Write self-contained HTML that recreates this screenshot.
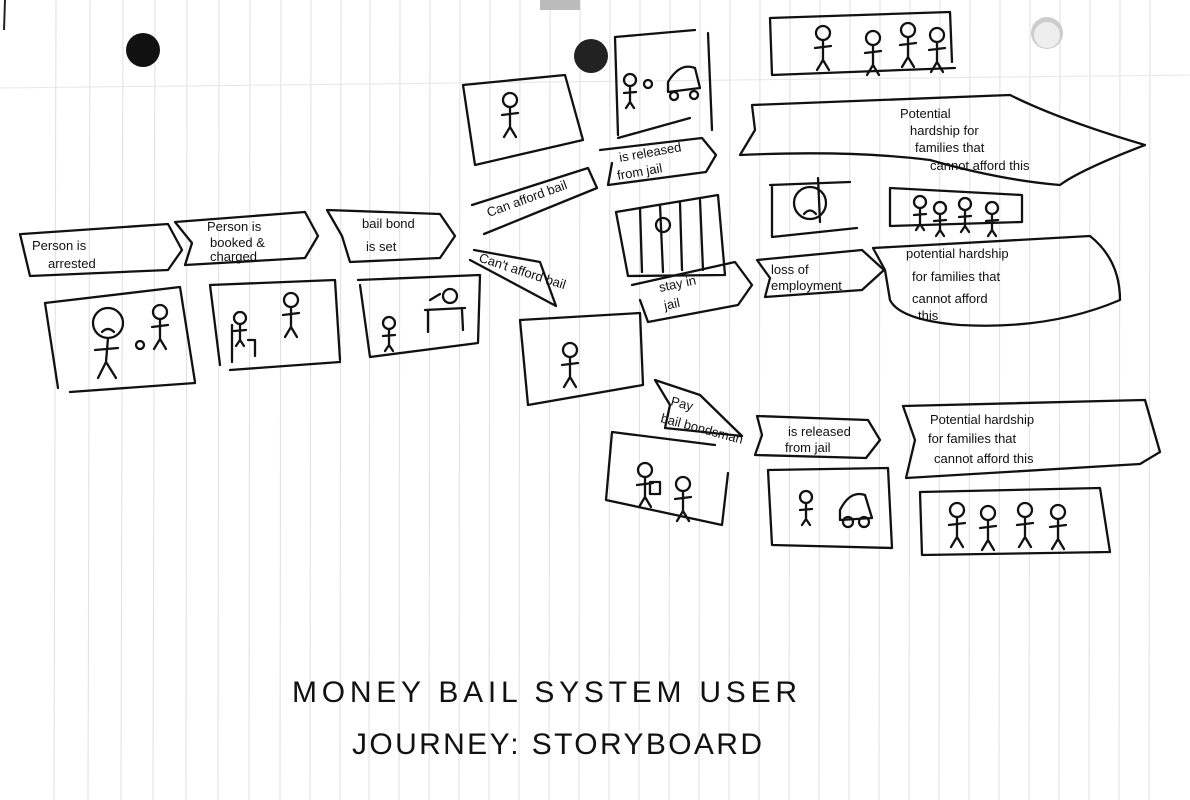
<!DOCTYPE html>
<html><head><meta charset="utf-8"><style>
html,body{margin:0;padding:0;background:#fff;}
svg{display:block}
.l{fill:none;stroke:#111;stroke-width:2.3;stroke-linecap:round;stroke-linejoin:round}
.t{font-family:"Liberation Sans",sans-serif;fill:#111;font-size:13px}
.b{font-family:"Liberation Sans",sans-serif;fill:#111;font-size:30px}
</style></head><body>
<svg width="1190" height="800" viewBox="0 0 1190 800">
<defs>
<g id="sf"><circle cx="0" cy="0" r="7" class="l"/><path class="l" d="M0 7 L0 27 M-8 15 L8 13 M0 27 L-6 37 M0 27 L6 37"/></g>
<g id="sfs"><circle cx="0" cy="0" r="6" class="l"/><path class="l" d="M0 6 L0 22 M-6 13 L6 12 M0 22 L-4 28 M0 22 L4 28"/></g>
</defs>
<g stroke="#e2e2e2" stroke-width="1.1">
<line x1="56" y1="0" x2="54" y2="800"/><line x1="90" y1="0" x2="88" y2="800"/><line x1="123" y1="0" x2="121" y2="800"/><line x1="155" y1="0" x2="153" y2="800"/><line x1="187" y1="0" x2="186" y2="800"/><line x1="219" y1="0" x2="218" y2="800"/><line x1="250" y1="0" x2="249" y2="800"/><line x1="281" y1="0" x2="280" y2="800"/><line x1="311" y1="0" x2="310" y2="800"/><line x1="341" y1="0" x2="340" y2="800"/><line x1="370" y1="0" x2="369" y2="800"/><line x1="400" y1="0" x2="399" y2="800"/><line x1="430" y1="0" x2="429" y2="800"/><line x1="460" y1="0" x2="459" y2="800"/><line x1="490" y1="0" x2="489" y2="800"/><line x1="520" y1="0" x2="519" y2="800"/><line x1="550" y1="0" x2="549" y2="800"/><line x1="580" y1="0" x2="579" y2="800"/><line x1="610" y1="0" x2="609" y2="800"/><line x1="640" y1="0" x2="639" y2="800"/><line x1="670" y1="0" x2="669" y2="800"/><line x1="700" y1="0" x2="699" y2="800"/><line x1="730" y1="0" x2="729" y2="800"/><line x1="760" y1="0" x2="759" y2="800"/><line x1="790" y1="0" x2="789" y2="800"/><line x1="820" y1="0" x2="819" y2="800"/><line x1="850" y1="0" x2="849" y2="800"/><line x1="880" y1="0" x2="879" y2="800"/><line x1="910" y1="0" x2="909" y2="800"/><line x1="940" y1="0" x2="939" y2="800"/><line x1="970" y1="0" x2="969" y2="800"/><line x1="1000" y1="0" x2="999" y2="800"/><line x1="1030" y1="0" x2="1029" y2="800"/><line x1="1060" y1="0" x2="1059" y2="800"/><line x1="1090" y1="0" x2="1089" y2="800"/><line x1="1120" y1="0" x2="1119" y2="800"/><line x1="1150" y1="0" x2="1149" y2="800"/>
<line x1="0" y1="88" x2="1190" y2="75" stroke="#e8e8e8"/>
</g>
<line x1="5" y1="0" x2="4" y2="30" stroke="#222" stroke-width="2"/>
<circle cx="143" cy="50" r="17" fill="#111"/>
<circle cx="591" cy="56" r="17" fill="#222"/>
<circle cx="1047" cy="33" r="16" fill="#ccc"/>
<circle cx="1047" cy="35" r="13" fill="#eee"/>
<rect x="540" y="0" width="40" height="10" fill="#bbb"/>

<path class="l" d="M22 234 L168 224 L182 250 L168 270 L30 276 L20 234"/>
<text class="t" x="32" y="250" font-size="15">Person is</text><text class="t" x="48" y="268" font-size="15">arrested</text>
<path class="l" d="M175 222 L305 212 L318 236 L305 258 L185 265 L192 243 Z"/>
<text class="t" x="207" y="231">Person is</text><text class="t" x="210" y="247">booked &amp;</text><text class="t" x="210" y="261">charged</text>
<path class="l" d="M327 210 L440 214 L455 236 L440 258 L350 262 L342 236 Z"/>
<text class="t" x="362" y="228">bail bond</text><text class="t" x="366" y="251">is set</text>
<path class="l" d="M472 205 L588 168 L597 188 L484 234"/>
<text class="t" x="488" y="213" transform="rotate(-20 500 213)">Can afford bail</text>
<path class="l" d="M474 250 L540 262 L556 306 L470 260"/>
<text class="t" x="478" y="262" font-size="11" transform="rotate(18 480 262)">Can't afford bail</text>
<path class="l" d="M600 150 L702 138 L716 155 L706 172 L608 185 L612 163"/>
<text class="t" x="620" y="162" transform="rotate(-10 620 162)">is released</text><text class="t" x="618" y="180" transform="rotate(-10 618 180)">from jail</text>
<path class="l" d="M752 105 L1010 95 Q1060 120 1145 145 Q1080 170 1060 185 Q1000 180 930 160 Q850 150 740 155 L755 130 Z"/>
<text class="t" x="900" y="118">Potential</text><text class="t" x="910" y="135">hardship for</text><text class="t" x="915" y="152">families that</text><text class="t" x="930" y="170">cannot afford this</text>
<path class="l" d="M632 285 L735 262 L752 285 L738 305 L648 322 L640 300"/>
<text class="t" x="660" y="292" transform="rotate(-12 660 292)">stay in</text><text class="t" x="665" y="310" transform="rotate(-12 665 310)">jail</text>
<path class="l" d="M757 260 L862 250 L884 270 L862 290 L765 297 L770 278 Z"/>
<text class="t" x="771" y="274" font-size="12">loss of</text><text class="t" x="771" y="290" font-size="12">employment</text>
<path class="l" d="M873 248 L1090 236 Q1120 260 1120 300 Q1050 330 960 325 Q900 320 890 300 L885 270 Z"/>
<text class="t" x="906" y="258">potential hardship</text><text class="t" x="912" y="281">for families that</text><text class="t" x="912" y="303">cannot afford</text><text class="t" x="918" y="320">this</text>
<path class="l" d="M655 380 L700 395 L742 436 L665 428 L670 405 Z"/>
<text class="t" x="670" y="405" transform="rotate(15 670 405)">Pay</text><text class="t" x="660" y="422" font-size="11" transform="rotate(15 660 422)">bail bondsman</text>
<path class="l" d="M757 416 L868 420 L880 440 L866 458 L755 455 L762 435 Z"/>
<text class="t" x="788" y="436">is released</text><text class="t" x="785" y="452">from jail</text>
<path class="l" d="M903 406 L1145 400 L1160 452 L1140 464 L906 478 L915 440 Z"/>
<text class="t" x="930" y="424">Potential hardship</text><text class="t" x="928" y="443">for families that</text><text class="t" x="934" y="463">cannot afford this</text>

<path class="l" d="M45 303 L180 287 L195 382 M70 392 L195 383 M45 303 L58 388"/>
<circle cx="108" cy="323" r="15" class="l"/><path class="l" d="M102 332 Q108 326 114 332 M108 338 L106 362 M95 350 L118 348 M106 362 L98 378 M106 362 L116 378"/>
<use href="#sf" x="160" y="312"/><circle cx="140" cy="345" r="4" class="l"/>
<path class="l" d="M210 285 L335 280 L340 360 M230 370 L340 362 M210 285 L220 365"/>
<use href="#sfs" x="240" y="318"/><path class="l" d="M248 340 L255 340 L255 356 M232 325 L232 362"/>
<use href="#sf" x="291" y="300"/>
<path class="l" d="M358 280 L480 275 L478 343 L370 357 L360 285"/>
<use href="#sfs" x="389" y="323"/><path class="l" d="M425 310 L465 308 M428 310 L428 332 M462 310 L463 330"/><circle cx="450" cy="296" r="7" class="l"/><path class="l" d="M430 300 L440 294"/>
<path class="l" d="M463 85 L565 75 L583 140 L475 165 Z"/>
<use href="#sf" x="510" y="100"/>
<path class="l" d="M615 37 L695 30 M708 33 L712 130 M618 138 L690 118 M615 37 L618 135"/>
<use href="#sfs" x="630" y="80"/><circle cx="648" cy="84" r="4" class="l"/><path class="l" d="M668 82 Q680 62 695 68 L700 88 L668 92 Z"/><circle cx="674" cy="96" r="4" class="l"/><circle cx="694" cy="95" r="4" class="l"/>
<path class="l" d="M770 18 L950 12 L952 62 M770 18 L772 75 L955 68"/>
<use href="#sf" x="823" y="33"/><use href="#sf" x="873" y="38"/><use href="#sf" x="908" y="30"/><use href="#sf" x="937" y="35"/>
<path class="l" d="M616 212 L718 195 L725 275 L628 276 Z M640 208 L642 272 M660 205 L663 272 M680 203 L682 270 M700 200 L703 270"/>
<circle cx="663" cy="225" r="7" class="l"/>
<path class="l" d="M770 185 L850 182 M818 178 L820 222 M772 185 L772 237 L857 228"/>
<circle cx="810" cy="203" r="16" class="l"/><path class="l" d="M804 214 Q810 207 816 214"/>
<path class="l" d="M890 188 L1022 195 L1022 222 L890 226 Z"/>
<use href="#sfs" x="920" y="202"/><use href="#sfs" x="940" y="208"/><use href="#sfs" x="965" y="204"/><use href="#sfs" x="992" y="208"/>
<path class="l" d="M520 320 L640 313 L643 385 L528 405 Z"/>
<use href="#sf" x="570" y="350"/>
<path class="l" d="M612 432 L715 445 M728 473 L722 525 L606 500 L612 432"/>
<use href="#sf" x="645" y="470"/><use href="#sf" x="683" y="484"/><rect x="650" y="482" width="10" height="12" class="l"/>
<path class="l" d="M768 470 L888 468 L892 548 L772 545 Z"/>
<use href="#sfs" x="806" y="497"/><path class="l" d="M840 510 Q850 490 865 495 L872 518 L840 520 Z"/><circle cx="848" cy="522" r="5" class="l"/><circle cx="864" cy="522" r="5" class="l"/>
<path class="l" d="M920 492 L1100 488 L1110 552 L922 555 Z"/>
<use href="#sf" x="957" y="510"/><use href="#sf" x="988" y="513"/><use href="#sf" x="1025" y="510"/><use href="#sf" x="1058" y="512"/>

<text class="b" x="292" y="702" textLength="505" lengthAdjust="spacing">MONEY BAIL SYSTEM USER</text>
<text class="b" x="352" y="754" textLength="410" lengthAdjust="spacing">JOURNEY: STORYBOARD</text>
</svg>
</body></html>
